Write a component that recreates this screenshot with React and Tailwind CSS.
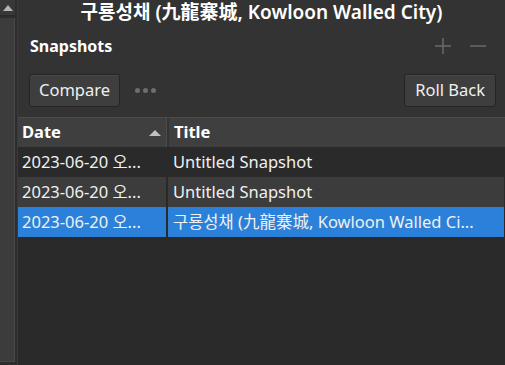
import React from 'react';

const font = { fontFamily: '"Noto Sans", "Noto Sans CJK KR", sans-serif' };

const rows = [
    { date: '2023-06-20 오...', title: 'Untitled Snapshot', kind: 'plain' },
    { date: '2023-06-20 오...', title: 'Untitled Snapshot', kind: 'alt' },
    { date: '2023-06-20 오...', title: '구룡성채 (九龍寨城, Kowloon Walled Ci...', kind: 'selected' },
];

const cellBg = {
    plain: 'bg-[#2a2a2a]',
    alt: 'bg-[#3c3c3c]',
    selected: 'bg-[#2b80da]',
};

const App = () => {
    return (
        <div className="flex w-[505px] h-[365px] bg-[#2a2a2a] text-[#f0f0f0] overflow-hidden" style={font}>
            {/* left scroll strip */}
            <div className="flex flex-col w-[17px] h-full bg-[#2d2d2d]">
                <div className="flex w-[15px] h-[16px] items-center justify-center bg-[#383838] border-b border-[#2a2a2a]">
                    <svg width="10" height="6" viewBox="0 0 10 6"><path d="M0 6 L5 0 L10 6 Z" fill="#b5b5b5" /></svg>
                </div>
                <div className="w-[15px] flex-1 bg-[#3c3c3c] border-r border-b border-[#4a4a4a] mt-[2px] mb-[3px]" />
            </div>

            {/* main panel */}
            <div className="flex flex-col flex-1 border-l border-[#3a3a3a]">
                <div className="bg-[#333333]">
                    <div className="h-[24px] flex items-center justify-center text-[19px] font-semibold leading-none text-white">
                        구룡성채 (九龍寨城, Kowloon Walled City)
                    </div>
                    <div className="h-[44px] flex items-center justify-between pl-[12px] pr-[18px]">
                        <span className="text-[16px] font-bold text-white">Snapshots</span>
                        <div className="flex items-center gap-[17px]">
                            <svg width="18" height="18" viewBox="0 0 18 18"><path d="M9 1 V17 M1 9 H17" stroke="#6b6b6b" strokeWidth="1.5" /></svg>
                            <svg width="18" height="18" viewBox="0 0 18 18"><path d="M1 9 H17" stroke="#6b6b6b" strokeWidth="1.5" /></svg>
                        </div>
                    </div>
                    <div className="h-[49px] flex items-start justify-between pl-[11px] pr-[9px] pt-[6px]">
                        <div className="flex items-center gap-[15px]">
                            <button className="h-[33px] px-[9px] rounded-[3px] bg-[#3e3e3e] border border-[#242424] shadow-[inset_0_1px_0_#4a4a4a] text-[16.5px] text-[#f0f0f0]">
                                Compare
                            </button>
                            <div className="flex gap-[3px]">
                                <span className="w-[5px] h-[5px] rounded-full bg-[#6e6e6e]" />
                                <span className="w-[5px] h-[5px] rounded-full bg-[#6e6e6e]" />
                                <span className="w-[5px] h-[5px] rounded-full bg-[#6e6e6e]" />
                            </div>
                        </div>
                        <button className="h-[33px] px-[10px] rounded-[3px] bg-[#3e3e3e] border border-[#242424] shadow-[inset_0_1px_0_#4a4a4a] text-[16.5px] text-[#f0f0f0]">
                            Roll Back
                        </button>
                    </div>
                </div>

                {/* table */}
                <div className="flex flex-col flex-1 bg-[#2a2a2a]">
                    <div className="flex h-[30px] bg-[#3f3f3f] border-t border-[#4a4a4a]">
                        <div className="w-[149px] flex items-center justify-between pl-[4px] pr-[5px] border-r border-[#4c4c4c]">
                            <span className="text-[16.5px] font-bold text-white">Date</span>
                            <svg width="12" height="6" viewBox="0 0 12 6"><path d="M0 6 L6 0 L12 6 Z" fill="#c0c0c0" /></svg>
                        </div>
                        <div className="w-[2px] bg-[#333333]" />
                        <div className="flex-1 flex items-center pl-[5px]">
                            <span className="text-[16.5px] font-bold text-white">Title</span>
                        </div>
                    </div>
                    {rows.map((row, i) => (
                        <div key={i} className="flex h-[30px]">
                            <div className={`w-[148px] flex items-center pl-[4px] text-[16.5px] whitespace-nowrap overflow-hidden ${cellBg[row.kind]}`}>
                                {row.date}
                            </div>
                            <div className="w-[2px]" />
                            <div className={`w-[336px] flex items-center pl-[5px] text-[16.5px] whitespace-nowrap overflow-hidden ${cellBg[row.kind]}`}>
                                {row.title}
                            </div>
                        </div>
                    ))}
                </div>
            </div>
        </div>
    );
};

export default App;
